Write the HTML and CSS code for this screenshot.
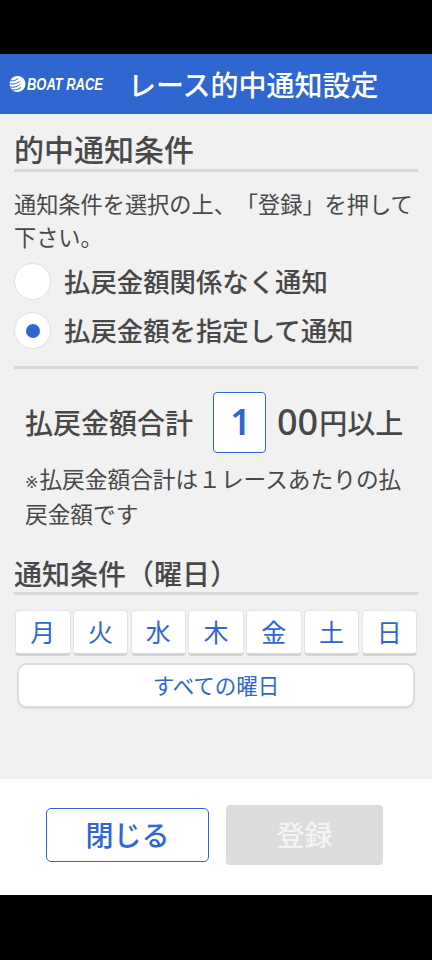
FILE: index.html
```html
<!DOCTYPE html>
<html lang="ja">
<head>
<meta charset="utf-8">
<title>レース的中通知設定</title>
<link rel="stylesheet" href="styles.css">
</head>
<body>
<div class="screen">
  <header class="header">
    <div class="logo">
      <svg class="logo-mark" viewBox="0 0 18 18" width="18" height="18">
        <circle cx="9.500" cy="9" r="8" fill="#fff"/>
        <path d="M0 5C4 6.500 7 6 10 3.500M0 8C4 10 8 9 11.500 6.500M0 11C4 13 8 12.500 12 9.500M2 14.500C5 15.500 9 15 13 12.500" fill="none" stroke="#2f66d0" stroke-width="1"/>
      </svg>
      <span class="logo-text">BOAT RACE</span>
    </div>
    <h1 class="header-title">レース的中通知設定</h1>
  </header>
  <main class="content">
    <h2 class="section-title">的中通知条件</h2>
    <p class="lead">通知条件を選択の上、「登録」を押して下さい。</p>
    <div class="radio-row"><span class="radio"></span><span class="radio-label">払戻金額関係なく通知</span></div>
    <div class="radio-row"><span class="radio checked"></span><span class="radio-label">払戻金額を指定して通知</span></div>
    <div class="rule"></div>
    <div class="amount-row">
      <span class="amount-label">払戻金額合計</span>
      <span class="amount-box">1</span>
      <span class="amount-zero">00</span><span class="amount-unit">円以上</span>
    </div>
    <p class="note"><span class="note-mark">※</span>払戻金額合計は１レースあたりの払戻金額です</p>
    <h2 class="section-title second">通知条件（曜日）</h2>
    <div class="days">
      <button class="day">月</button>
      <button class="day">火</button>
      <button class="day">水</button>
      <button class="day">木</button>
      <button class="day">金</button>
      <button class="day">土</button>
      <button class="day">日</button>
    </div>
    <button class="all-days">すべての曜日</button>
  </main>
  <footer class="footer">
    <button class="btn-close">閉じる</button>
    <button class="btn-submit">登録</button>
  </footer>
</div>
</body>
</html>
```
FILE: styles.css
```css
* { box-sizing: border-box; }
html, body { margin: 0; padding: 0; background: #000; }
body { font-family: "Noto Sans CJK JP", "Noto Sans", sans-serif; color: #484848; text-spacing-trim: space-all; }
.screen { width: 432px; height: 960px; padding: 54px 0 65px; display: flex; flex-direction: column; }
.header { height: 60px; background: #2f66d0; display: flex; align-items: center; flex: none; }
.logo { width: 128px; flex: none; display: flex; align-items: center; padding-left: 8px; color: #fff; }
.logo-mark { flex: none; margin-right: 1px; }
.logo-text { font: italic 700 17px/1 "Liberation Sans", sans-serif; transform: scaleX(.76); transform-origin: left center; white-space: nowrap; }
.header-title { margin: 0; font-size: 28px; font-weight: 500; line-height: 1; color: #fff; white-space: nowrap; }
.content { flex: 1; background: #f1f1f1; padding: 16px 14px 0; }
.section-title { margin: 0; height: 42px; font-size: 30px; line-height: 37px; font-weight: 500; border-bottom: 3px solid #d8d8d8; white-space: nowrap; }
.section-title.second { font-size: 28px; height: 39px; line-height: 35px; margin-top: 25px; }
.lead { margin: 15px 0 0; font-size: 22.200px; line-height: 33px; }
.radio-row { display: flex; align-items: center; height: 49px; gap: 13px; }
.lead + .radio-row { margin-top: 4px; }
.radio { width: 37px; height: 37px; border-radius: 50%; background: #fff; border: 1px solid #e0e0e0; display: flex; align-items: center; justify-content: center; flex: none; }
.radio.checked::after { content: ""; width: 14px; height: 14px; border-radius: 50%; background: #2f66d0; }
.radio-label { font-size: 26.400px; font-weight: 500; line-height: 1; white-space: nowrap; }
.rule { height: 3px; background: #d8d8d8; margin-top: 11px; }
.amount-row { display: flex; align-items: center; margin-top: 22px; padding-left: 11px; height: 62px; white-space: nowrap; }
.amount-label { font-size: 28px; font-weight: 500; line-height: 1; width: 188px; }
.amount-box { width: 53px; height: 61px; padding-left: 2px; background: #fff; border: 1px solid #2f66d0; border-radius: 4px; color: #2f66d0; font: 600 36px/1 "Noto Sans", sans-serif; display: flex; align-items: center; justify-content: center; }
.amount-zero { font: 500 36px/1 "Noto Sans", sans-serif; margin-left: 11px; }
.amount-unit { font-size: 28px; font-weight: 500; line-height: 1; margin-left: 1px; }
.note { margin: 9px 0 0; padding: 0 11px; font-size: 22.700px; line-height: 34.500px; }
.note-mark { font-family: "DejaVu Sans", sans-serif; font-size: 16px; line-height: 1; margin-right: 1px; }
.days { display: flex; justify-content: space-between; margin-top: 15px; padding: 0 1px; }
.day { width: 55.500px; height: 46px; padding: 0 0 1px; background: #fff; border: 1px solid #e4e4e4; border-bottom: 3px solid #d4d4d4; border-radius: 4px; color: #2f66d0; font: 400 25px/1 "Noto Sans CJK JP", sans-serif; }
.all-days { display: block; width: 398px; height: 46px; margin: 7px 0 0 3px; padding: 0 0 2px; background: #fff; border: 2px solid #dcdcdc; border-bottom-width: 3px; border-radius: 10px; color: #2f66d0; font: 400 21.500px/1 "Noto Sans CJK JP", sans-serif; }
.footer { height: 116px; flex: none; background: #fff; display: flex; align-items: center; justify-content: center; gap: 17px; padding: 0 3px 4px 0; }
.btn-close { width: 163px; height: 54px; background: #fff; border: 1px solid #2f66d0; border-radius: 5px; color: #2f66d0; font: 500 28px/1 "Noto Sans CJK JP", sans-serif; padding: 0 0 3px; }
.btn-submit { width: 157px; height: 60px; background: #dcdcdc; border: none; border-radius: 4px; color: #f4f4f4; font: 500 28px/1 "Noto Sans CJK JP", sans-serif; padding: 0 0 3px; }
```
